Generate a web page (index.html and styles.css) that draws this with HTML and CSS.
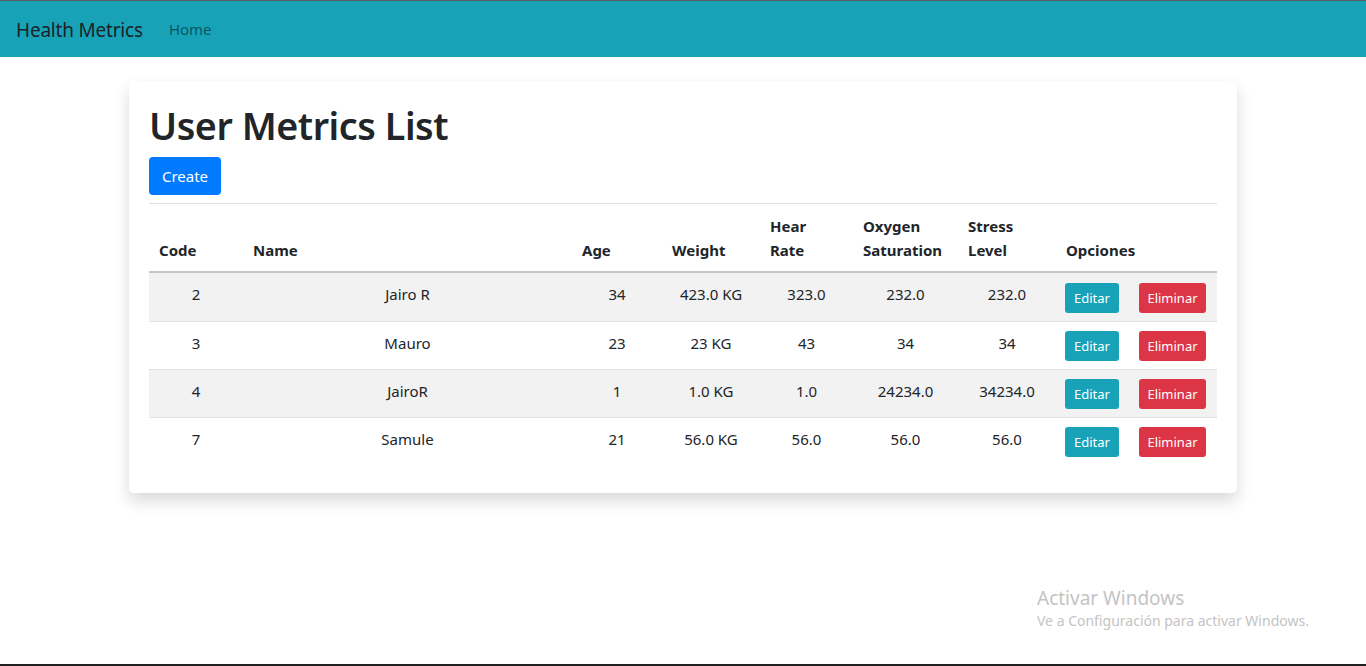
FILE: index.html
```html
<!DOCTYPE html>
<html lang="es">
<head>
<meta charset="utf-8">
<title>Health Metrics</title>
<link rel="stylesheet" href="styles.css">
</head>
<body>
<div class="topline"></div>
<nav class="navbar">
  <a class="brand" href="#">Health Metrics</a>
  <a class="nav-link" href="#">Home</a>
</nav>
<main class="card">
  <h1 class="title">User Metrics List</h1>
  <button class="btn btn-primary">Create</button>
  <table class="table">
    <colgroup>
      <col class="c-code"><col class="c-name"><col class="c-age"><col class="c-weight">
      <col class="c-hear"><col class="c-oxy"><col class="c-stress"><col class="c-opt">
    </colgroup>
    <thead>
      <tr>
        <th>Code</th><th>Name</th><th>Age</th><th>Weight</th>
        <th>Hear Rate</th><th>Oxygen Saturation</th><th>Stress Level</th><th>Opciones</th>
      </tr>
    </thead>
    <tbody>
      <tr class="odd">
        <td>2</td><td>Jairo R</td><td>34</td><td>423.0 KG</td><td>323.0</td><td>232.0</td><td>232.0</td>
        <td class="opts"><button class="btn-sm btn-info">Editar</button><button class="btn-sm btn-danger">Eliminar</button></td>
      </tr>
      <tr>
        <td>3</td><td>Mauro</td><td>23</td><td>23 KG</td><td>43</td><td>34</td><td>34</td>
        <td class="opts"><button class="btn-sm btn-info">Editar</button><button class="btn-sm btn-danger">Eliminar</button></td>
      </tr>
      <tr class="odd">
        <td>4</td><td>JairoR</td><td>1</td><td>1.0 KG</td><td>1.0</td><td>24234.0</td><td>34234.0</td>
        <td class="opts"><button class="btn-sm btn-info">Editar</button><button class="btn-sm btn-danger">Eliminar</button></td>
      </tr>
      <tr>
        <td>7</td><td>Samule</td><td>21</td><td>56.0 KG</td><td>56.0</td><td>56.0</td><td>56.0</td>
        <td class="opts"><button class="btn-sm btn-info">Editar</button><button class="btn-sm btn-danger">Eliminar</button></td>
      </tr>
    </tbody>
  </table>
</main>
<div class="watermark">
  <div class="wm-title">Activar Windows</div>
  <div class="wm-sub">Ve a Configuración para activar Windows.</div>
</div>
<div class="taskbar"></div>
</body>
</html>
```
FILE: styles.css
```css
html, body {
  margin: 0;
  padding: 0;
}
body {
  font-family: "Noto Sans", "Open Sans", sans-serif;
  font-size: 16px;
  line-height: 1.5;
  color: #212529;
  background: #fff;
  height: 666px;
  overflow: hidden;
}
.topline {
  height: 1px;
  background: #585c5e;
}
.navbar {
  height: 56px;
  background: #17a2b8;
  display: flex;
  align-items: center;
  padding: 0 16px;
  box-sizing: border-box;
}
.brand {
  font-size: 19px;
  color: #1c2326;
  text-decoration: none;
  margin-right: 18px;
  letter-spacing: -0.2px;
  padding-top: 2px;
}
.nav-link {
  color: rgba(0,0,0,0.5);
  text-decoration: none;
  padding: 0 8px;
  font-size: 15px;
  padding-top: 1px;
}
.card {
  width: 1108px;
  box-sizing: border-box;
  margin: 24px auto 0;
  padding: 20px 20px 28px;
  border-radius: 5px;
  background: #fff;
  box-shadow: 0 8px 16px rgba(0,0,0,0.15);
}
.title {
  margin: 0 0 8px;
  font-size: 37.7px;
  font-weight: 600;
  line-height: 48px;
  letter-spacing: -0.45px;
  padding-top: 1px;
  height: 48px;
  box-sizing: border-box;
}
.btn {
  font-family: inherit;
  font-size: 15px;
  line-height: 24px;
  border: 1px solid transparent;
  border-radius: 4px;
  padding: 6px 12px;
  height: 38px;
  box-sizing: border-box;
  cursor: pointer;
}
.btn-primary {
  background: #007bff;
  color: #fff;
  display: block;
  margin-bottom: 8px;
  width: 72px;
  padding: 6px 0;
}
.table {
  width: 1068px;
  border-collapse: collapse;
  table-layout: fixed;
}
.c-code { width: 94px; }
.c-name { width: 329px; }
.c-age { width: 90px; }
.c-weight { width: 98px; }
.c-hear { width: 93px; }
.c-oxy { width: 105px; }
.c-stress { width: 98px; }
.c-opt { width: 161px; }
th, td {
  padding: 8px 10px;
  border-top: 1px solid #dee2e6;
  font-size: 15px;
}
th {
  text-align: left;
  vertical-align: bottom;
  font-weight: 700;
  border-bottom: 2px solid #c4c6c8;
  line-height: 24px;
  padding-top: 10px;
  padding-bottom: 9px;
}
td {
  text-align: center;
  vertical-align: middle;
  line-height: 24px;
  height: 31px;
  padding-top: 5px;
  padding-bottom: 11px;
}
tbody tr:first-child td {
  border-top: 0;
  padding-bottom: 12px;
}
tr.odd td {
  background: #f2f2f2;
}
td.opts {
  text-align: left;
  padding-left: 9px;
  padding-top: 8px;
  padding-bottom: 8px;
}
tbody tr:first-child td.opts {
  padding-top: 9px;
  padding-bottom: 8px;
}
.btn-sm {
  font-family: inherit;
  font-size: 13px;
  line-height: 20px;
  height: 30px;
  border: 0;
  border-radius: 3px;
  color: #fff;
  padding: 0;
  vertical-align: middle;
  cursor: pointer;
}
.btn-info {
  background: #17a2b8;
  width: 54px;
  margin-right: 20px;
}
.btn-danger {
  background: #dc3545;
  width: 67px;
}
.watermark {
  position: absolute;
  left: 1037px;
  top: 584px;
  color: #c4c4c4;
  font-family: "Noto Sans", sans-serif;
}
.wm-title {
  font-size: 19px;
  line-height: 28px;
}
.wm-sub {
  font-size: 14px;
  line-height: 18px;
}
.taskbar {
  position: absolute;
  left: 0;
  right: 0;
  top: 664px;
  height: 2px;
  background: #202020;
}
```
